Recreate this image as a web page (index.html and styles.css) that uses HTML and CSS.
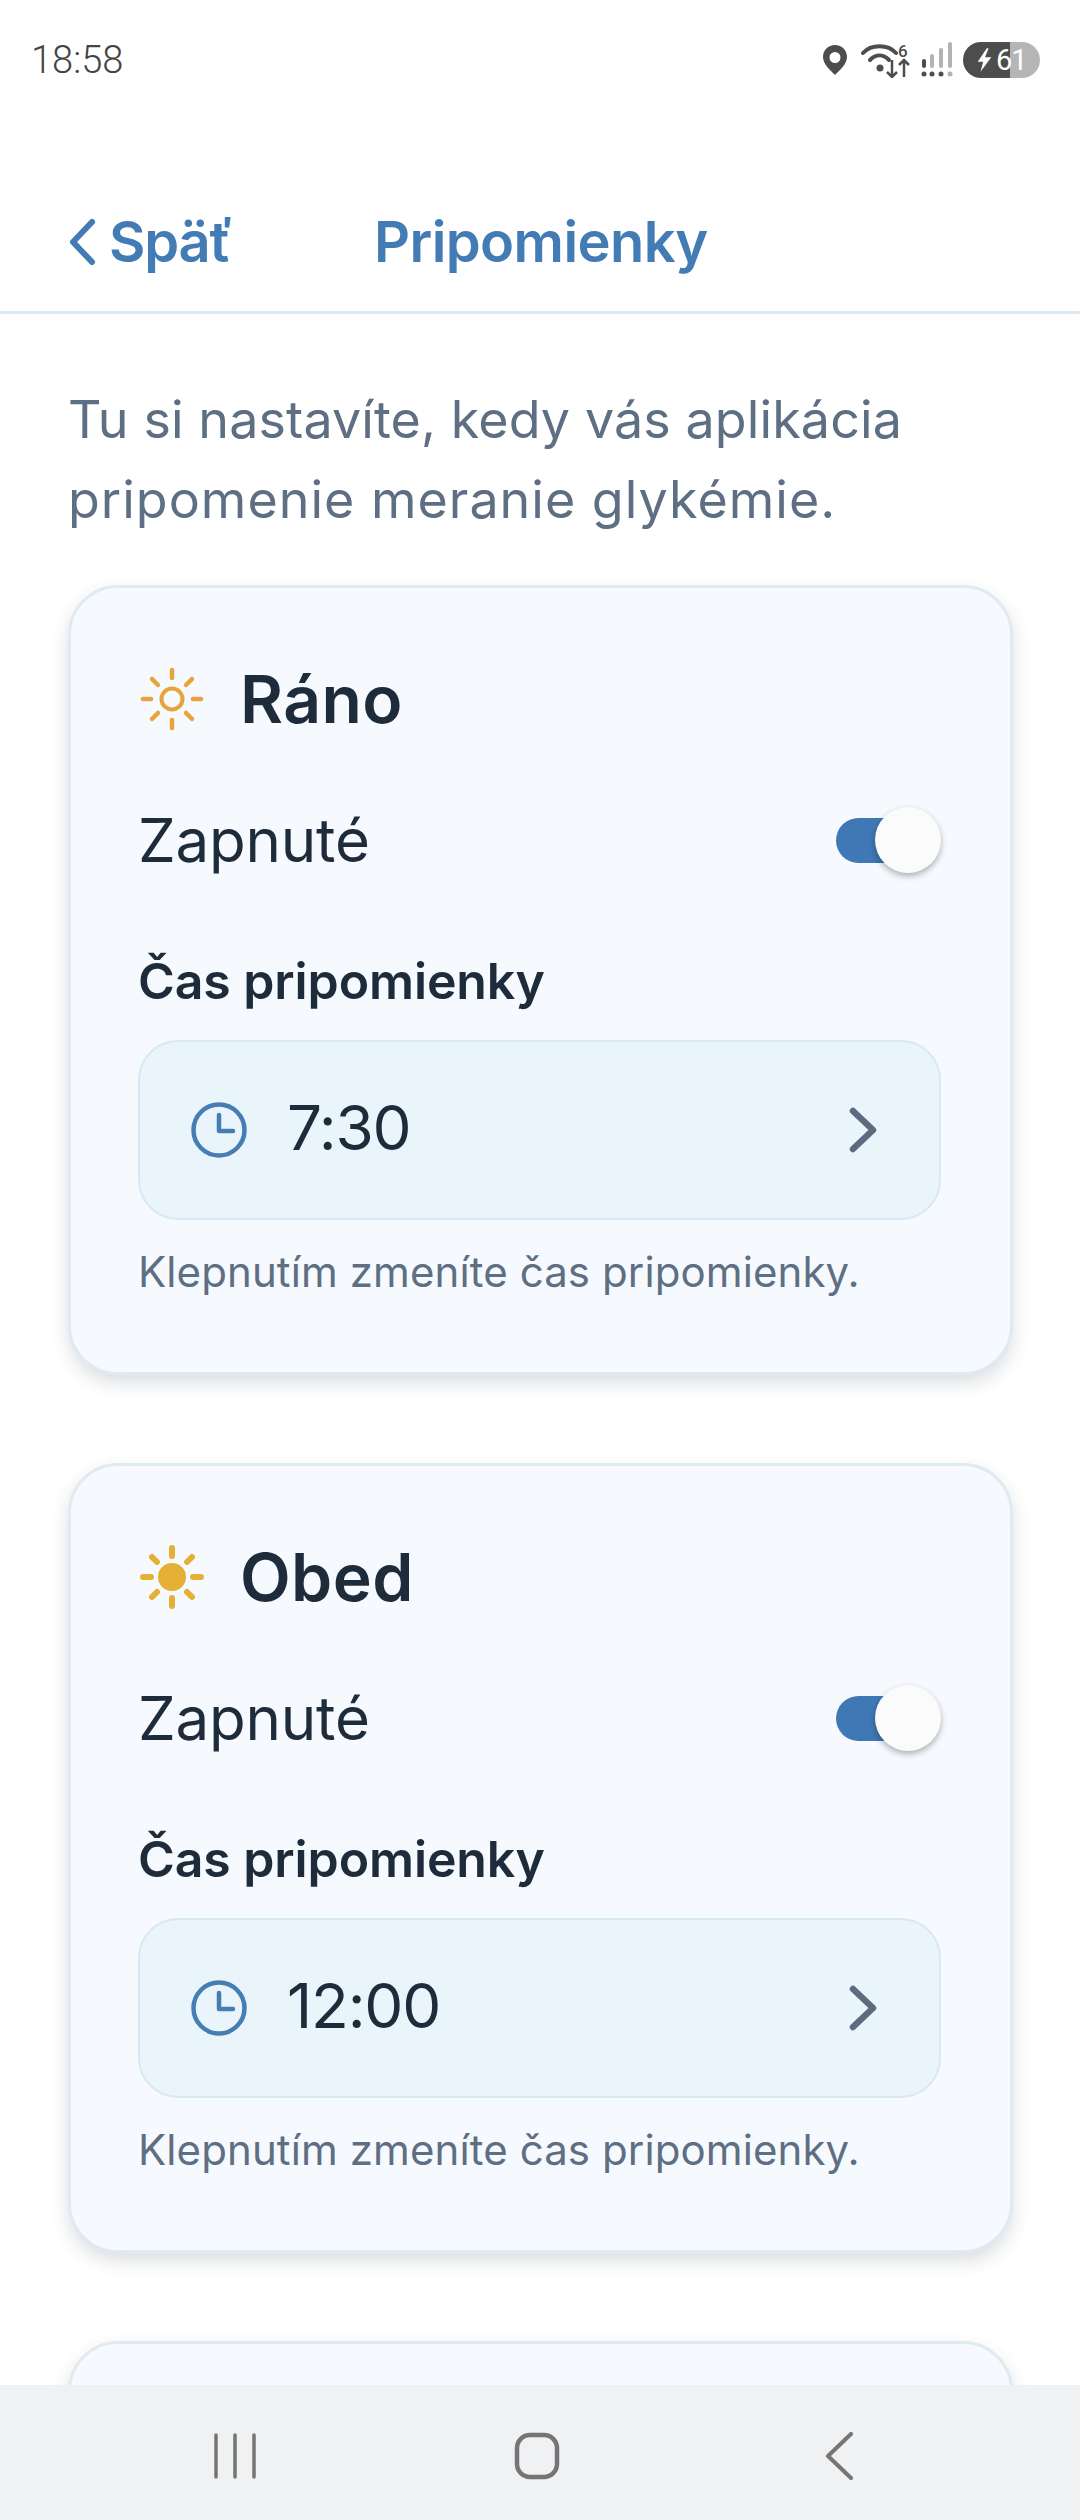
FILE: index.html
```html
<!DOCTYPE html>
<html lang="sk">
<head>
    <meta charset="UTF-8">
    <meta name="viewport" content="width=device-width, initial-scale=1.0">
    <title>Pripomienky</title>
    <link rel="stylesheet" href="styles.css">
</head>
<body>

<div class="status-bar">
    <span class="status-time">18:58</span>
    <div class="status-icons">
        <svg class="status-pin" width="26" height="32" viewBox="0 0 26 32"><path fill="#4d4d4d" fill-rule="evenodd" d="M13 1C6 1 1 6 1 13c0 7 7 13 12 18 5-5 12-11 12-18C25 6 20 1 13 1zm0 7a5.500 5.500 0 1 1 0 11 5.500 5.500 0 0 1 0-11z"/></svg>
        <svg width="50" height="36" viewBox="0 0 50 36">
            <g fill="none" stroke="#4d4d4d" stroke-width="4" stroke-linecap="round">
                <path d="M2 11C10 2 27 2 35 11"/>
                <path d="M9 18C15 12 22 12 28 18"/>
            </g>
            <circle cx="19" cy="26" r="3.500" fill="#4d4d4d"/>
            <text class="status-six" x="37" y="15">6</text>
            <g fill="none" stroke="#4d4d4d" stroke-width="2.500">
                <path d="M31 18V35M26 30l5 5 5-5"/>
                <path d="M43 35V18M38 23l5-5 5 5"/>
            </g>
        </svg>
        <svg width="32" height="36" viewBox="0 0 32 36">
            <g fill="#b3b3b3">
                <rect x="1" y="17" width="4" height="9" rx="2" fill="#4d4d4d"/>
                <rect x="9" y="12" width="4" height="14" rx="2"/>
                <rect x="18" y="6" width="4" height="20" rx="2"/>
                <rect x="27" y="0" width="4" height="26" rx="2"/>
            </g>
            <circle cx="3" cy="32" r="2.500" fill="#4d4d4d"/>
            <circle cx="11" cy="32" r="2.500" fill="#4d4d4d"/>
            <circle cx="20" cy="32" r="2.500" fill="#4d4d4d"/>
            <circle cx="29" cy="32" r="2.500" fill="#b3b3b3"/>
        </svg>
        <div class="battery">
            <svg class="battery-bolt" width="18" height="24" viewBox="0 0 20 26"><path fill="#fff" d="M12 0L2 15h6l-3 11 12-16h-7l4-10z"/></svg>
            <span class="battery-num">61</span>
        </div>
    </div>
</div>

<div class="header">
    <a class="back">
        <svg width="30" height="48" viewBox="0 0 30 48"><path d="M25 4L6 24l19 20" fill="none" stroke="#437cb4" stroke-width="6" stroke-linecap="round" stroke-linejoin="round"/></svg>
        <span>Späť</span>
    </a>
    <h1 class="title">Pripomienky</h1>
</div>

<div class="content">
    <p class="intro">
        <span class="intro-line">Tu si nastavíte, kedy vás aplikácia</span>
        <span class="intro-line intro-line-wide">pripomenie meranie glykémie.</span>
    </p>

    <div class="card">
        <div class="card-head">
            <svg class="sun" width="64" height="64" viewBox="0 0 64 64">
                <g stroke="#e8a33d" stroke-width="4.500" stroke-linecap="round" fill="none">
                    <circle cx="32" cy="32" r="10.500" stroke-width="4"/>
                    <path d="M32 3v8M32 53v8M3 32h8M53 32h8M12 12l6 6M46 46l6 6M12 52l6-6M46 18l6-6"/>
                </g>
            </svg>
            <h2>Ráno</h2>
        </div>
        <div class="switch-row">
            <span>Zapnuté</span>
            <div class="toggle"><div class="toggle-thumb"></div></div>
        </div>
        <div class="field-label">Čas pripomienky</div>
        <div class="time-box">
            <svg width="58" height="58" viewBox="0 0 58 58"><g fill="none" stroke="#467db2" stroke-width="4.500" stroke-linecap="round" stroke-linejoin="round"><circle cx="29" cy="29" r="25.500"/><path d="M29 14v16h14"/></g></svg>
            <span class="time-value">7:30</span>
            <svg class="chevron" width="28" height="46" viewBox="0 0 28 46"><path d="M4 4l20 19L4 42" fill="none" stroke="#5c6b80" stroke-width="6.500" stroke-linecap="round" stroke-linejoin="round"/></svg>
        </div>
        <p class="hint">Klepnutím zmeníte čas pripomienky.</p>
    </div>

    <div class="card">
        <div class="card-head">
            <svg class="sun" width="64" height="64" viewBox="0 0 64 64">
                <circle cx="32" cy="32" r="14" fill="#e5b036"/>
                <path d="M32 3v8M32 53v8M3 32h8M53 32h8M12 12l5 5M47 47l5 5M12 52l5-5M47 17l5-5" stroke="#e5b036" stroke-width="6" stroke-linecap="round" fill="none"/>
            </svg>
            <h2>Obed</h2>
        </div>
        <div class="switch-row">
            <span>Zapnuté</span>
            <div class="toggle"><div class="toggle-thumb"></div></div>
        </div>
        <div class="field-label">Čas pripomienky</div>
        <div class="time-box">
            <svg width="58" height="58" viewBox="0 0 58 58"><g fill="none" stroke="#467db2" stroke-width="4.500" stroke-linecap="round" stroke-linejoin="round"><circle cx="29" cy="29" r="25.500"/><path d="M29 14v16h14"/></g></svg>
            <span class="time-value">12:00</span>
            <svg class="chevron" width="28" height="46" viewBox="0 0 28 46"><path d="M4 4l20 19L4 42" fill="none" stroke="#5c6b80" stroke-width="6.500" stroke-linecap="round" stroke-linejoin="round"/></svg>
        </div>
        <p class="hint">Klepnutím zmeníte čas pripomienky.</p>
    </div>

    <div class="card card-peek"></div>
</div>

<div class="nav-bar">
    <svg width="44" height="46" viewBox="0 0 44 46"><path d="M3 2v42M22 2v42M41 2v42" stroke="#757575" stroke-width="3.500" stroke-linecap="round"/></svg>
    <svg width="46" height="48" viewBox="0 0 46 48"><rect x="3" y="3" width="40" height="42" rx="13" fill="none" stroke="#757575" stroke-width="4.500"/></svg>
    <svg width="32" height="48" viewBox="0 0 32 48"><path d="M28 2L5 24l23 22" fill="none" stroke="#757575" stroke-width="4" stroke-linecap="round" stroke-linejoin="round"/></svg>
</div>

</body>
</html>
```

FILE: styles.css
```css
* {
    box-sizing: border-box;
}
body {
    margin: 0;
    width: 1080px;
    height: 2520px;
    overflow: hidden;
    display: flex;
    flex-direction: column;
    background-color: #fff;
    font-family: "Inter", "Liberation Sans", sans-serif;
    color: #1e2b3b;
}
h1, h2, p {
    margin: 0;
}

/* status bar */
.status-bar {
    height: 120px;
    padding: 0 40px 0 31px;
    display: flex;
    justify-content: space-between;
    align-items: center;
}
.status-time {
    font-family: "Roboto", sans-serif;
    font-weight: 300;
    font-size: 38px;
    color: #444;
}
.status-icons {
    display: flex;
    align-items: center;
    gap: 10px;
}
.status-pin {
    margin-right: 3px;
}
.status-six {
    font-family: "Roboto", sans-serif;
    font-size: 17px;
    font-weight: 500;
    fill: #4d4d4d;
}
.battery {
    width: 77px;
    height: 36px;
    border-radius: 18px;
    background: linear-gradient(90deg, #4d4d4d 47px, #b5b5b5 47px);
    display: flex;
    align-items: center;
}
.battery-bolt {
    margin-left: 13px;
}
.battery-num {
    margin-left: 2px;
    font-family: "Roboto", sans-serif;
    font-size: 29px;
    font-weight: 400;
    letter-spacing: -1px;
    color: #fff;
}

/* header */
.header {
    height: 194px;
    flex-shrink: 0;
    padding: 52px 0 0 67px;
    display: flex;
    align-items: center;
    border-bottom: 3px solid #dfe9f1;
    color: #437cb4;
}
.back {
    width: 307px;
    display: flex;
    align-items: center;
    gap: 12px;
    font-size: 56px;
    font-weight: 600;
    letter-spacing: -1.2px;
}
.title {
    font-size: 56px;
    font-weight: 600;
    letter-spacing: -0.6px;
}

/* content */
.content {
    flex: 1;
    min-height: 0;
    overflow: hidden;
    padding: 66px 67px 0 68px;
}
.intro {
    font-size: 52px;
    line-height: 80px;
    letter-spacing: 0.1px;
    color: #5e6f84;
    margin-bottom: 45px;
}
.intro-line {
    display: block;
}
.intro-line-wide {
    letter-spacing: 1px;
}
.card {
    height: 790px;
    margin-bottom: 88px;
    padding: 75px 69px 0 67px;
    background-color: #f6fafe;
    border: 3px solid #dfeaf3;
    border-radius: 50px;
    box-shadow: 0 8px 18px rgba(30, 50, 70, 0.16);
}
.card-head {
    display: flex;
    align-items: center;
    gap: 36px;
    height: 72px;
}
.card-head h2 {
    font-size: 66px;
    font-weight: 600;
    letter-spacing: 0.4px;
}
.sun {
    flex-shrink: 0;
    margin-left: 2px;
}
.switch-row {
    margin-top: 70px;
    height: 70px;
    display: flex;
    justify-content: space-between;
    align-items: center;
    font-size: 60px;
    letter-spacing: -0.2px;
}
.toggle {
    position: relative;
    width: 94px;
    height: 45px;
    margin-right: 11px;
    border-radius: 23px;
    background-color: #3f78b5;
}
.toggle-thumb {
    position: absolute;
    right: -11px;
    top: -11px;
    width: 66px;
    height: 66px;
    border-radius: 50%;
    background-color: #fbfbfb;
    box-shadow: 0 3px 6px rgba(0, 0, 0, 0.3);
}
.field-label {
    margin-top: 77px;
    font-size: 50px;
    font-weight: 600;
    line-height: 58px;
    letter-spacing: -0.1px;
}
.time-box {
    margin-top: 30px;
    height: 180px;
    padding: 0 62px 0 50px;
    display: flex;
    align-items: center;
    background-color: #e9f4fb;
    border: 2px solid #d9e8f2;
    border-radius: 40px;
}
.time-value {
    margin-left: 39px;
    padding-bottom: 5px;
    font-size: 62px;
    letter-spacing: -1.2px;
}
.chevron {
    margin-left: auto;
}
.hint {
    margin-top: 24px;
    font-size: 42px;
    line-height: 56px;
    letter-spacing: 0.1px;
    color: #5e6f84;
}
.card-peek {
    margin-bottom: 0;
}

/* nav */
.nav-bar {
    position: absolute;
    left: 0;
    right: 0;
    bottom: 0;
    height: 135px;
    padding: 6px 0 0 84px;
    display: grid;
    grid-template-columns: repeat(3, 302px);
    justify-items: center;
    align-items: center;
    background-color: #f0f1f3;
}
```
